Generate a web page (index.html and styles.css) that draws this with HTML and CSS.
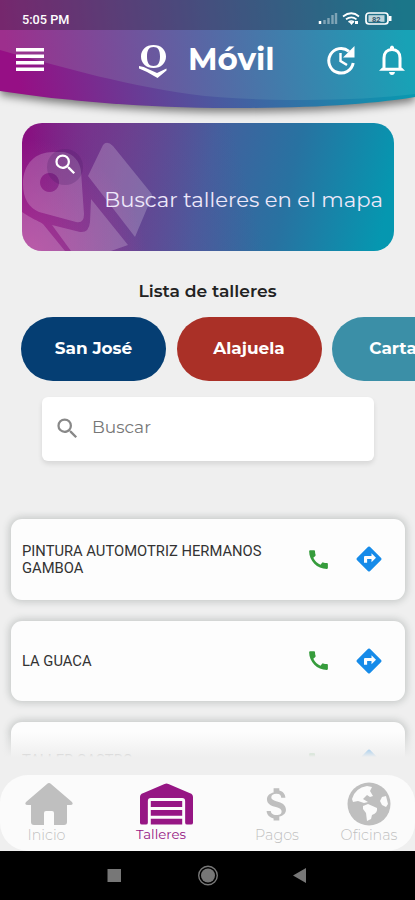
FILE: index.html
```html
<!DOCTYPE html>
<html lang="es">
<head>
<meta charset="utf-8">
<meta name="viewport" content="width=device-width, initial-scale=1">
<title>Talleres</title>
<link rel="stylesheet" href="styles.css">
</head>
<body>
<svg class="defs" width="0" height="0" aria-hidden="true">
  <symbol id="search" viewBox="0 0 24 24"><path d="M15.5 14h-.79l-.28-.27A6.47 6.47 0 0 0 16 9.5 6.5 6.5 0 1 0 9.5 16c1.61 0 3.09-.59 4.23-1.57l.27.28v.79l5 4.99L20.49 19l-4.99-5zm-6 0a4.5 4.5 0 1 1 0-9 4.5 4.5 0 0 1 0 9z"/></symbol>
  <symbol id="phone" viewBox="0 0 24 24"><path d="M20.01 15.38c-1.23 0-2.42-.2-3.53-.56a.98.98 0 0 0-1.01.24l-1.57 1.97c-2.83-1.35-5.48-3.9-6.89-6.83l1.95-1.66c.27-.28.35-.67.24-1.02-.37-1.11-.56-2.3-.56-3.53 0-.54-.45-.99-.99-.99H4.19C3.65 3 3 3.24 3 3.99 3 13.28 10.73 21 20.01 21c.71 0 .99-.63.99-1.18v-3.45c0-.54-.45-.99-.99-.99z"/></symbol>
  <symbol id="directions" viewBox="0 0 24 24"><path d="m21.71 11.29-9-9a.996.996 0 0 0-1.41 0l-9 9a.996.996 0 0 0 0 1.410l9 9c.39.39 1.020.39 1.410 0l9-9a.996.996 0 0 0 0-1.410zM14 14.500V12h-3.500v3H8v-4.500c0-.55.45-1 1-1h5V7.300l3.600 3.600-3.600 3.600z"/></symbol>
</svg>

<header class="header">
  <svg class="header-bg" viewBox="0 0 415 112" aria-hidden="true">
    <defs>
      <linearGradient id="deep" gradientUnits="userSpaceOnUse" x1="20" y1="90" x2="400" y2="20"><stop offset="0" stop-color="#960f85"/><stop offset=".5" stop-color="#4a59a0"/><stop offset="1" stop-color="#0899b0"/></linearGradient>
      <linearGradient id="light" gradientUnits="userSpaceOnUse" x1="10" y1="80" x2="405" y2="30"><stop offset="0" stop-color="#9d2f8d"/><stop offset=".48" stop-color="#5a65a4"/><stop offset="1" stop-color="#18a2b6"/></linearGradient>
    </defs>
    <path fill="url(#deep)" d="M0 0H415V97C365 105 310 108 230 108C145 108 65 101 0 91Z"/>
    <path fill="url(#light)" d="M0 0H415V94C360 101 275 102 205 96C130 87 65 68 0 50Z"/>
  </svg>
  <div class="status">
    <span>5:05 PM</span>
    <svg width="74" height="16" viewBox="0 0 74 16" aria-hidden="true">
      <path stroke="#fff" stroke-width="2.400" opacity=".4" d="M6.500 14v-4M10.500 14v-6M14.500 14v-9M18 14v-11"/><path stroke="#fff" stroke-width="2.500" d="M2 14v-3"/>
      <g fill="none" stroke="#fff" stroke-width="1.700"><path d="M25 6.500q8.500-6.500 16 0M28 9.300q5.500-4 10.500 0M30.500 12q3-2 5.500 0"/></g><path fill="#fff" d="m31 12 2.500 3 2.500-3zM37 11h3v3h-3z"/>
      <rect x="48" y="3" width="22" height="11" rx="3" fill="none" stroke="#fff" stroke-width="1.700"/><rect x="50.500" y="5.200" width="16" height="6.600" fill="#fff" opacity=".7"/><path fill="#fff" d="M71 6h2.500v5h-2.500z"/><text x="54" y="11.500" class="battery">82</text>
    </svg>
  </div>
  <div class="bar">
    <svg class="menu" width="28" height="24" viewBox="0 0 28 24"><path fill="#fff" d="M0 0h28v3.500H0zM0 6.500h28V10H0zM0 13h28v3.500H0zM0 19.500h28V23H0z"/></svg>
    <div class="brand">
      <svg width="28" height="34" viewBox="0 0 28 34"><path fill="#fff" fill-rule="evenodd" d="M14.500 0C22 0 27 4.800 27 11.500S22 23 14.500 23 2 18.200 2 11.500 7 0 14.500 0zm0 2C10 2 8 5 8 11.500S10 21 14.500 21 21 18 21 11.500 19 2 14.500 2zM0 21q5 .5 9 3l9 4 9.500-4.500v2L18.500 33 8 27Q3 24.500 0 23.500z"/></svg>
      <span>Móvil</span>
    </div>
    <svg class="history" width="30" height="30" viewBox="0 0 30 30"><g fill="none" stroke="#fff" stroke-width="3"><path d="M23 6.300A12.300 12.300 0 1 0 27.200 18"/><path d="M14.500 8v8l6.500 4" stroke-width="2.400"/></g><path fill="#fff" d="M28.500 1v11.500H17z"/></svg>
    <svg class="bell" width="26" height="31" viewBox="0 0 26 31"><path d="M5 24V13C5 8 8 4.500 13 4.500S21 8 21 13v11" fill="none" stroke="#fff" stroke-width="3"/><path fill="#fff" d="M11 4V2q2-3 4 0v2zM3 22.700h20l3 3H0zM10 27h6q-.5 3-3 3t-3-3z"/></svg>
  </div>
</header>

<main>
  <a class="map-banner">
    <svg class="map-art" viewBox="0 0 140 128" aria-hidden="true">
      <g fill="#fff" fill-opacity=".2"><path fill-rule="evenodd" d="M1 61C1 40 14 29 31 29H42C52 31 58 39 59 48L62 91Q62 101 54 99L17 89Q1 82 1 61ZM27.500 50a9.500 9.500 0 1 0 .1 0z"/><path d="M66 53 81 22Q85 17 91 23L129 70Q131 73 129 76L113 114ZM0 89C10 96 15 97 21 101L43 128H0ZM30 102 58 109Q67 110 68 99L69 76 106 122 89 128H49Z"/></g><circle cx="43" cy="44" r="18" fill="#461b62" fill-opacity=".23"/>
    </svg>
    <svg class="banner-search"><use href="#search"/></svg>
    <span>Buscar talleres en el mapa</span>
  </a>
  <h1>Lista de talleres</h1>
  <div class="provinces">
    <button class="navy"><span>San José</span></button><button class="red"><span>Alajuela</span></button><button class="teal"><span>Cartago</span></button>
  </div>
  <label class="search"><svg><use href="#search"/></svg><span>Buscar</span></label>
  <section class="list">
    <article><p>PINTURA AUTOMOTRIZ HERMANOS GAMBOA</p><svg class="phone"><use href="#phone"/></svg><svg class="route"><use href="#directions"/></svg></article>
    <article><p>LA GUACA</p><svg class="phone"><use href="#phone"/></svg><svg class="route"><use href="#directions"/></svg></article>
    <article><p>TALLER CASTRO</p><svg class="phone"><use href="#phone"/></svg><svg class="route"><use href="#directions"/></svg></article>
  </section>
</main>

<nav class="tabs">
  <a class="home"><svg width="48" height="44" viewBox="0 0 48 44"><path fill="currentColor" d="M22 2q2-2 4 0l21 18q2 3-2 3h-3v17q0 3-3 3H29V31q0-2-2-2h-6q-2 0-2 2v12H9q-3 0-3-3V23H3q-4 0-2-3z"/></svg><span>Inicio</span></a>
  <a class="shops"><svg width="54" height="44" viewBox="0 0 54 44"><path fill="currentColor" fill-rule="evenodd" d="M0 15Q0 12 3 11L25 1.500q2-.8 4 0L51 11q3 1 3 4v26q0 2-2 2h-4q-2 0-2-2V19q0-3-3-3H11q-3 0-3 3v22q0 2-2 2H2q-2 0-2-2zM11 19h32v6H11zM11 28h32v6H11zM11 37h32v6H11z"/></svg><span>Talleres</span></a>
  <a class="payments"><svg width="48" height="44" viewBox="0 0 24 22"><path fill="currentColor" d="M11.800 9.900c-2.270-.59-3-1.200-3-2.150 0-1.090 1.010-1.850 2.700-1.850 1.780 0 2.440.85 2.500 2.100h2.210c-.07-1.720-1.120-3.300-3.210-3.810V3h-3v2.160C8.060 5.580 6.500 6.840 6.500 8.770c0 2.310 1.910 3.460 4.700 4.130 2.500.6 3 1.480 3 2.410 0 .69-.49 1.790-2.700 1.790-2.060 0-2.870-.92-2.980-2.100h-2.200c.12 2.190 1.760 3.420 3.680 3.830V20h3v-2.150c1.950-.37 3.500-1.500 3.500-3.550 0-2.840-2.430-3.810-4.700-4.400z" transform="translate(.8 .3) scale(.95)"/></svg><span>Pagos</span></a>
  <a class="offices"><svg width="44" height="44" viewBox="0 0 44 44"><circle cx="22" cy="22" r="21.500" fill="currentColor"/><path fill="#fbfbfb" d="M5 17Q8 6 20 4l5 1-2 4 3 5-3 1-3-2-4 4 5 3-4 1-6-2-5 1zM16 24l5-2 9 4q1 5-5 7l-1 4-4 2-1-8-3-4zM35 15l4-1 2 8-2 3-4-2-2-4z"/></svg><span>Oficinas</span></a>
</nav>
<footer class="system"><svg width="415" height="49" viewBox="0 0 415 49"><path fill="#777" d="M107.500 18h13.500v13h-13.500zM306 17v15l-13-7.500z"/><circle cx="208" cy="24.500" r="9.300" fill="none" stroke="#777" stroke-width="1.400"/><circle cx="208" cy="24.500" r="7" fill="#777"/></svg></footer>
</body>
</html>
```

FILE: styles.css
```css
* { box-sizing: border-box; }
body {
  margin: 0;
  width: 415px;
  height: 900px;
  overflow: hidden;
  display: flex;
  flex-direction: column;
  background: #efefef;
  color: #222;
  font-family: Montserrat, Inter, sans-serif;
}
svg { display: block; flex: none; }
.defs { position: absolute; }

.header { position: relative; height: 112px; flex: none; color: #fff; }
.header-bg {
  position: absolute;
  inset: 0;
  width: 415px;
  height: 112px;
  z-index: -1;
  overflow: visible;
  filter: drop-shadow(0 4px 4px rgba(0, 0, 0, .5));
}
.status {
  height: 30px;
  padding: 8px 23px 0 22px;
  display: flex;
  justify-content: space-between;
  align-items: center;
  background: rgba(35, 25, 45, .32);
  font: 500 12.700px Roboto, sans-serif;
}
.status svg { margin-top: -2px; }
.status span { margin-top: 0; }
.battery { fill: #35576c; font: 700 7.500px Roboto, sans-serif; }
.bar { height: 60px; display: flex; align-items: center; padding: 0 10px 0 16px; }
.menu { margin-top: -1px; }
.brand { display: flex; align-items: center; gap: 21px; width: 196px; margin-left: 95px; }
.brand svg { margin-top: 3px; }
.brand span { font-size: 31px; font-weight: 700; line-height: 36px; margin-top: -3px; }
.history { margin: -1px 0 0 -9px; }
.bell { margin: 0 0 0 23px; }

main { height: 663px; flex: none; display: flex; flex-direction: column; }
.map-banner {
  position: relative;
  margin: 11px 21px 0 22px;
  height: 128px;
  flex: none;
  border-radius: 20px;
  overflow: hidden;
  display: flex;
  justify-content: flex-end;
  align-items: flex-end;
  padding: 0 11px 37px;
  color: #eee8fa;
  background: radial-gradient(circle at 0 110%, rgba(190, 60, 155, .75), rgba(190, 60, 155, 0) 125px), linear-gradient(75deg, rgba(125, 55, 145, 0) 10%, rgba(120, 60, 145, .4) 25%, rgba(110, 60, 145, 0) 60%), linear-gradient(103deg, #8b0d80 0%, #67418f 27%, #43609e 49%, #2872a1 70%, #0597b0 96%);
  font-size: 21.150px;
  line-height: 28px;
  white-space: nowrap;
}
.map-art { position: absolute; left: 0; top: 0; width: 140px; height: 128px; }
.banner-search { position: absolute; left: 30px; top: 28px; width: 27px; height: 27px; fill: #fff; }
.map-banner span { position: relative; }
h1 { margin: 29px 0 15px; font-size: 17.200px; line-height: 22px; font-weight: 600; text-align: center; }
.provinces { display: flex; gap: 10.500px; padding-left: 21px; height: 64px; flex: none; overflow: hidden; }
button {
  width: 145px;
  height: 64px;
  padding: 0 0 2px;
  flex: none;
  border: 0;
  border-radius: 32px;
  color: #fff;
  font: 700 16.900px Montserrat, Inter, sans-serif;
}
.navy { background: #053e73; }
.red { background: #aa3027; }
.teal { background: #3b8fa7; }
.search {
  width: 332px;
  height: 64px;
  margin: 16px 0 0 42px;
  padding: 0 12px 2px;
  flex: none;
  display: flex;
  align-items: center;
  gap: 11px;
  border-radius: 6px;
  background: #fff;
  box-shadow: 0 3px 5px rgba(0, 0, 0, .1);
  color: #777;
  font-size: 17px;
}
.search svg { width: 27px; height: 27px; fill: #888; }
.search span { margin-top: -2px; }
.list {
  position: relative;
  height: 255px;
  margin-top: 41px;
  padding: 17px 10px 0 11px;
  display: flex;
  flex-direction: column;
  gap: 21px;
  overflow: hidden;
}
.list::after { content: ""; position: absolute; inset: auto 0 0; height: 25px; background: linear-gradient(rgba(239, 239, 239, 0), #efefef); }
article {
  height: 80.500px;
  flex: none;
  display: flex;
  align-items: center;
  padding: 0 21.500px 0 11px;
  border-radius: 11px;
  background: #fdfdfd;
  box-shadow: 0 0 7px 2px rgba(70, 85, 80, .24);
}
article p { width: 266px; padding: 1px 16px 0 0; margin: 0; font: 14.750px/17px Roboto, sans-serif; color: #333; }
article:last-child p { padding: 0 16px 4px 0; }
.phone { width: 25px; height: 25px; margin-left: 18px; fill: #369c3c; }
.route { width: 30px; height: 30px; margin-left: auto; fill: #168be9; }

.tabs {
  height: 76px;
  flex: none;
  display: grid;
  grid-template-columns: 98px 137px 84px 96px;
  border-radius: 28px;
  background: #fbfbfb;
  color: #bfbfbf;
  font-size: 14.300px;
  font-weight: 300;
}
.tabs a { display: flex; flex-direction: column; align-items: center; padding-top: 7px; }
.tabs span { line-height: 18px; white-space: nowrap; }
.shops { color: #961684; }
.shops svg { width: 53px; margin-left: -1px; }
.tabs .shops span { margin-left: -11px; margin-top: -1px; font-size: 13.300px; font-weight: 400; }
.tabs .home span { margin-left: -5px; }
.offices svg { margin-left: 4px; }
.offices span { margin-left: 4px; }
.system { height: 49px; flex: none; background: #000; }
```
